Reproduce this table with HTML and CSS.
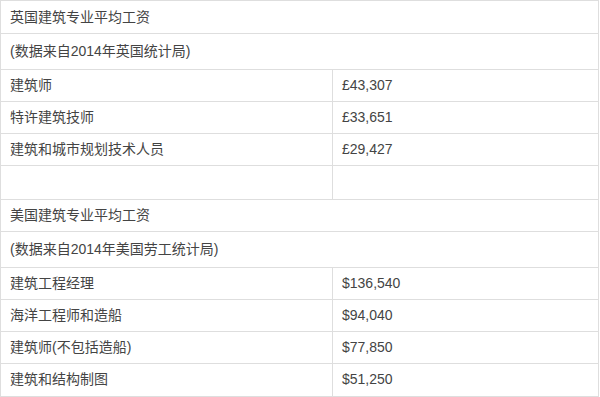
FILE: index.html
```html
<!DOCTYPE html>
<html>
  <head>
    <title>建筑专业平均工资</title>
    <link rel="stylesheet" href="styles.css">
  </head>

  <body>
    <table class="salary">
      <tr class="first">
        <td colspan="2">英国建筑专业平均工资</td>
      </tr>
      <tr class="tall">
        <td colspan="2">(数据来自2014年英国统计局)</td>
      </tr>
      <tr>
        <td class="job">建筑师</td>
        <td>£43,307</td>
      </tr>
      <tr>
        <td class="job">特许建筑技师</td>
        <td>£33,651</td>
      </tr>
      <tr>
        <td class="job">建筑和城市规划技术人员</td>
        <td>£29,427</td>
      </tr>
      <tr class="blank">
        <td class="job">&nbsp;</td>
        <td>&nbsp;</td>
      </tr>
      <tr>
        <td colspan="2">美国建筑专业平均工资</td>
      </tr>
      <tr class="tall">
        <td colspan="2">(数据来自2014年美国劳工统计局)</td>
      </tr>
      <tr>
        <td class="job">建筑工程经理</td>
        <td>$136,540</td>
      </tr>
      <tr>
        <td class="job">海洋工程师和造船</td>
        <td>$94,040</td>
      </tr>
      <tr>
        <td class="job">建筑师(不包括造船)</td>
        <td>$77,850</td>
      </tr>
      <tr class="last">
        <td class="job">建筑和结构制图</td>
        <td>$51,250</td>
      </tr>
    </table>
  </body>
</html>
```

FILE: styles.css
```css
body {
  margin: 0;
  font-family: "Liberation Sans", "Noto Sans CJK SC", sans-serif;
  font-size: 14px;
  color: #444;
}

.salary {
  border-collapse: collapse;
  width: 599px;
}

.salary td {
  border: 1px solid #dedede;
  padding: 5px 9px;
  line-height: 21px;
  white-space: nowrap;
}

.salary .job {
  width: 313px;
}

.salary .first td {
  padding-top: 6px;
}

.salary .tall td {
  padding-top: 7px;
  padding-bottom: 7px;
}

.salary .blank td {
  padding-top: 6px;
  padding-bottom: 6px;
}

.salary .last td {
  padding-bottom: 6px;
}
```
